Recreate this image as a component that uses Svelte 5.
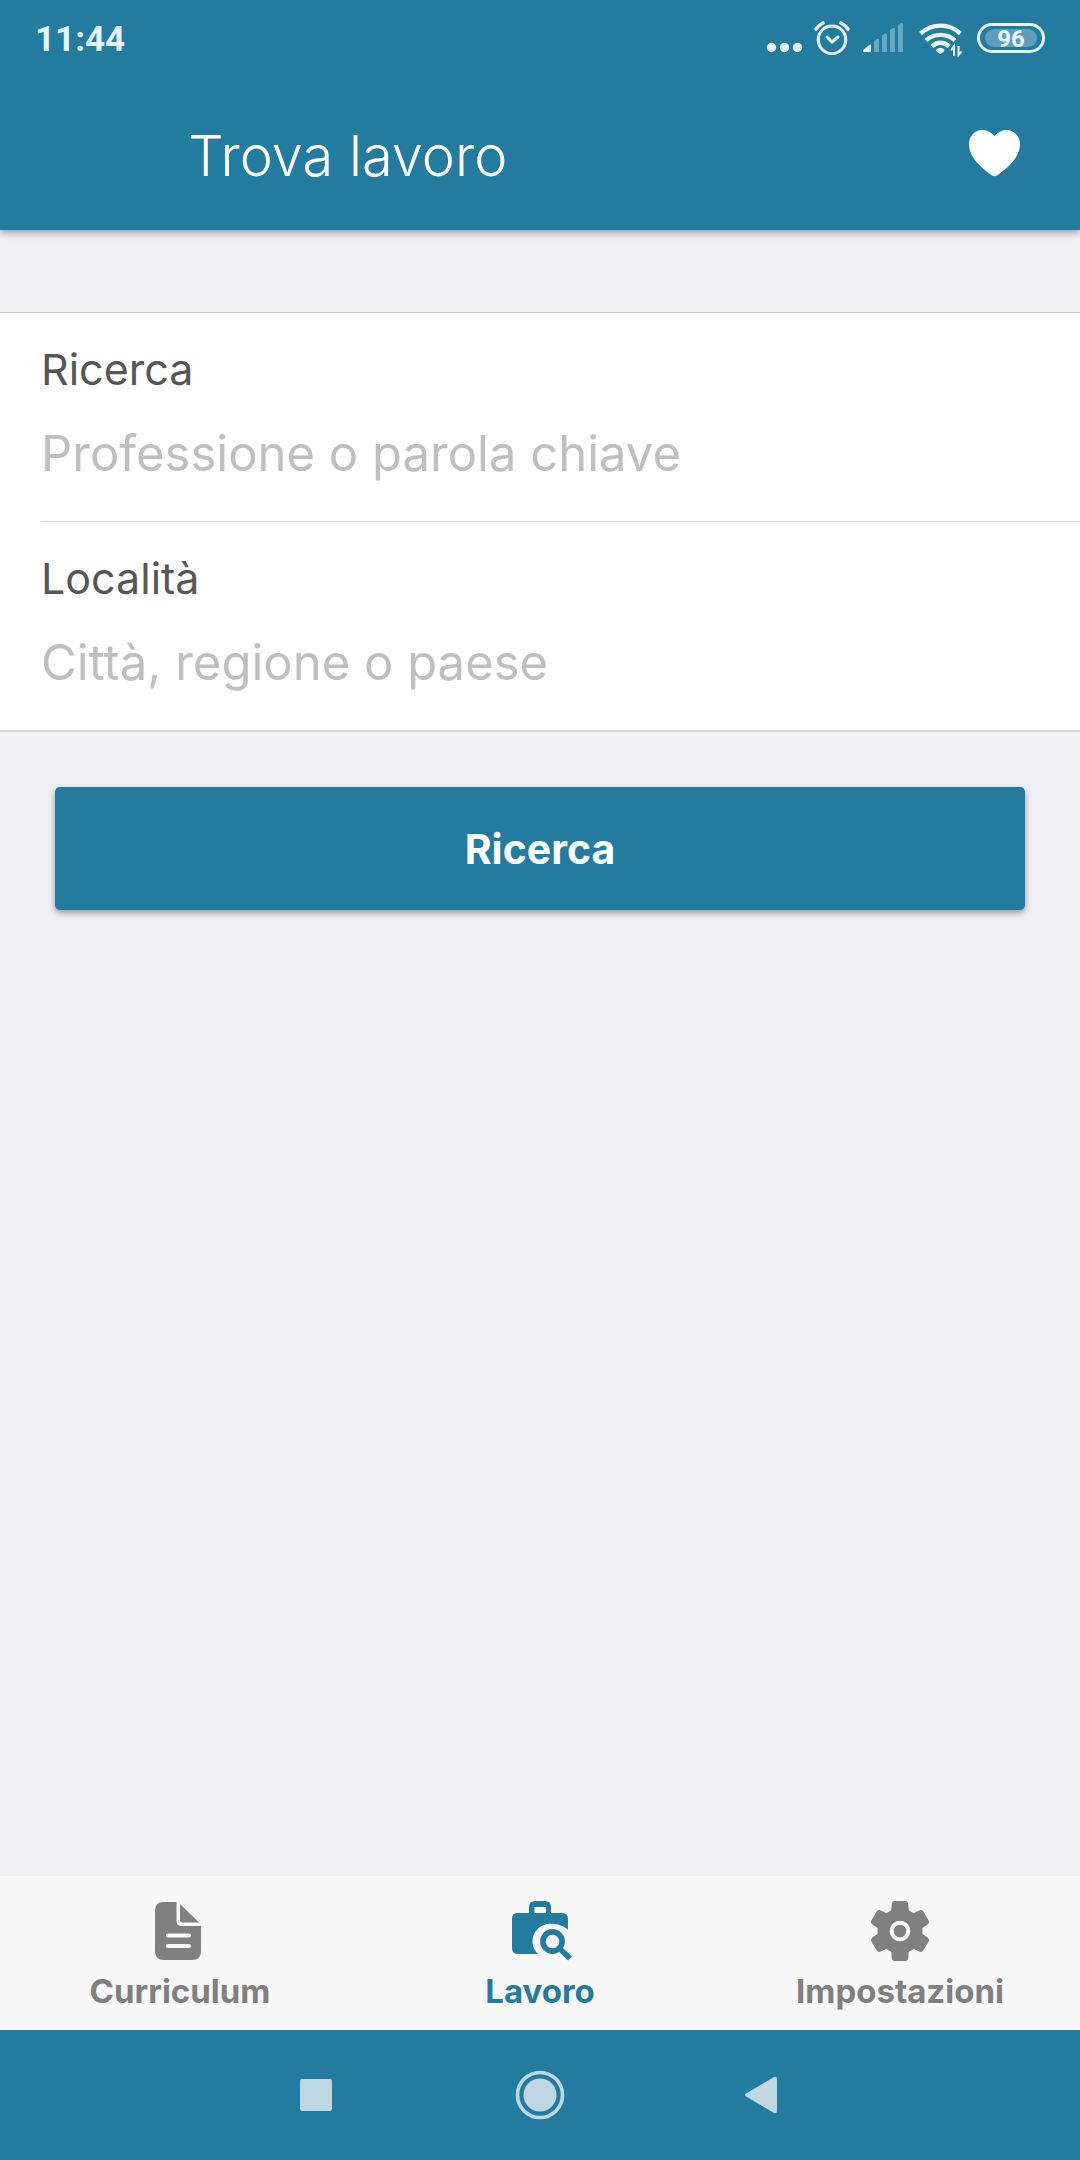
<script>
  let query = $state('');
  let place = $state('');
  let active = $state('lavoro');
</script>

<div class="screen">
  <header>
    <div class="status">
      <time>11:44</time>
      <div class="indicators">
        <svg width="36" height="52" viewBox="766 12 36 52" fill="#e6f4fb" aria-hidden="true">
          <circle cx="771.5" cy="47.5" r="4.7" /><circle cx="784.5" cy="47.5" r="4.7" /><circle cx="797.5" cy="47.5" r="4.7" />
        </svg>
        <svg width="37" height="52" viewBox="815 12 37 52" fill="none" stroke="#e6f4fb" stroke-width="3" stroke-linecap="round" aria-hidden="true">
          <circle cx="832" cy="39.8" r="13.8" />
          <path d="M827 37l5 5 6-5" stroke-linejoin="round" />
          <path d="M816 29c2-3 4-4.500 7-6M848 29c-2-3-4-4.500-7-6" stroke-width="3.600" />
        </svg>
        <svg width="42" height="52" viewBox="865 12 42 52" aria-hidden="true">
          <path d="M863 52v-2l7-5.500h1V52z" fill="#e6f4fb" />
          <path d="M874 52V41l3-2.200 2 .2v13zM882 52V35.500l3-2 2 .2V52zM890 52V30l3-2 2 .2V52zM898 52V25l3-2 2 .2V52z" fill="#67a8c2" />
        </svg>
        <svg width="44" height="52" viewBox="920 12 44 52" fill="none" stroke="#e6f4fb" stroke-width="4.400" aria-hidden="true">
          <path d="M920.500 33.500c12-10.500 28-10.500 40 0M926 40.500c8-7.500 21-7.500 29 0M932 46.500c5-5 12-5 17 0" />
          <path d="M936 50c2.500-3 6-3 8.500 0 .3 1-2.700 3.800-4.200 3.800s-4.600-2.800-4.300-3.800z" fill="#e6f4fb" stroke="none" />
          <path d="M954 56V46l-3 4.500M958.500 46v9l3-3.500" stroke-width="2" />
        </svg>
        <span class="battery"><span>96</span></span>
      </div>
    </div>
    <div class="bar">
      <h1>Trova lavoro</h1>
      <button class="fav" aria-label="Preferiti">
        <svg width="51" height="47" viewBox="0 0 51 47" fill="#fff" aria-hidden="true">
          <path d="M25.500 6C21.500 1.800 17.500 0 13.500 0 5.500 0 0 6.200 0 14c0 13.500 13 24.500 23 31.500q2.500 1.600 5 0C38 38.500 51 27.500 51 14 51 6.200 45 0 37.500 0c-4 0-8 1.800-12 6z" />
        </svg>
      </button>
    </div>
  </header>

  <main>
    <form onsubmit={(e) => e.preventDefault()}>
      <div class="fields">
        <div class="field">
          <label for="query">Ricerca</label>
          <input id="query" type="text" placeholder="Professione o parola chiave" bind:value={query} />
        </div>
        <div class="field">
          <label for="place">Località</label>
          <input id="place" type="text" placeholder="Città, regione o paese" bind:value={place} />
        </div>
      </div>
      <button class="submit" type="submit">Ricerca</button>
    </form>
  </main>

  <nav class="tabs" aria-label="Sezioni">
    <button class:active={active === 'curriculum'} onclick={() => (active = 'curriculum')}>
      <svg width="60" height="60" viewBox="2 0 60 60" aria-hidden="true">
        <path fill="currentColor" d="M15 1h13.500v18.500q0 5.500 5.500 5.500h19v25q0 9-9 9H16q-9 0-9-9V10Q7 1 15 1z" />
        <path fill="currentColor" d="M32 3v16q0 2.500 2.500 2.500H51z" />
        <path d="M20 34.500h21M20 45h21" stroke="#f8f8f8" stroke-width="4.200" stroke-linecap="round" />
      </svg>
      <span>Curriculum</span>
    </button>
    <button class:active={active === 'lavoro'} onclick={() => (active = 'lavoro')}>
      <svg width="60" height="60" viewBox="-1 0 60 60" aria-hidden="true">
        <path fill="currentColor" fill-rule="evenodd" d="M6 12h12V6q0-6 6-6h10q6 0 6 6v6h11q6 0 6 6v29q0 6-6 6H7q-6 0-6-6V18q0-6 5-6zM23.500 6v6h11.500V6z" />
        <path fill="#f8f8f8" d="M41.500 23a17.500 17.500 0 0 0-14 30.500H60V32q-7-9-18.500-9z" />
        <circle cx="41.500" cy="40.500" r="9.600" fill="none" stroke="currentColor" stroke-width="5.600" />
        <path d="M48.500 47.500l10.500 10" stroke="currentColor" stroke-width="5.600" />
      </svg>
      <span>Lavoro</span>
    </button>
    <button class:active={active === 'impostazioni'} onclick={() => (active = 'impostazioni')}>
      <svg width="60" height="60" viewBox="0 0 60 60" aria-hidden="true">
        <g fill="currentColor">
          <circle cx="30" cy="30" r="22.500" />
          {#each [0, 60, 120, 180, 240, 300] as angle}
            <path d="M19 14q2-2 2.300-5l.5-6Q22 0 25 0h10q3 0 3.200 3l.5 6q.3 3 2.300 5L30 30z" transform="rotate({angle} 30 30)" />
          {/each}
        </g>
        <circle cx="30" cy="30" r="8.300" fill="none" stroke="#f8f8f8" stroke-width="4" />
      </svg>
      <span>Impostazioni</span>
    </button>
  </nav>

  <div class="system">
    <button aria-label="App recenti">
      <svg width="50" height="50" viewBox="0 0 50 50"><rect x="7" y="9" width="32" height="32" rx="2" /></svg>
    </button>
    <button aria-label="Home">
      <svg width="50" height="50" viewBox="0 0 50 50"><circle cx="25" cy="25" r="16.500" /><circle class="ring" cx="25" cy="25" r="22.500" /></svg>
    </button>
    <button aria-label="Indietro">
      <svg width="50" height="50" viewBox="1 0 50 50"><path d="M10 23.500L38 7q3-1 3 2v32q0 3-3 2L10 26.500q-2-1.500 0-3z" /></svg>
    </button>
  </div>
</div>

<style>
  :global(body) {
    margin: 0;
  }
  .screen {
    display: flex;
    flex-direction: column;
    min-height: 100vh;
    background: #efeff4;
    font-family: Inter, 'Open Sans', sans-serif;
  }
  button {
    margin: 0;
    padding: 0;
    border: 0;
    background: none;
    font-family: inherit;
    cursor: pointer;
  }
  svg {
    display: block;
    overflow: visible;
  }
  header {
    background: #247ba0;
    color: #fff;
    box-shadow: 0 2px 8px rgba(0, 0, 0, 0.4);
  }
  .status {
    display: flex;
    align-items: center;
    justify-content: space-between;
    height: 76px;
    padding: 0 35px;
  }
  time {
    padding-top: 4px;
    color: #e6f4fb;
    font: 700 35px/40px Roboto, sans-serif;
  }
  .indicators {
    display: flex;
    align-items: center;
    gap: 13px;
  }
  .battery {
    display: flex;
    box-sizing: border-box;
    width: 68px;
    height: 30px;
    padding: 3px 5px;
    border: 3px solid #e6f4fb;
    border-radius: 15px;
  }
  .battery span {
    flex: 1;
    border-radius: 9px;
    background: #5d9fbc;
    color: #e6f4fb;
    font: 700 24px/20px Roboto, sans-serif;
    text-align: center;
  }
  .bar {
    display: flex;
    align-items: center;
    justify-content: space-between;
    height: 154px;
    padding: 0 60px 0 188px;
  }
  h1 {
    margin: 0;
    padding-top: 6px;
    font-size: 56px;
    font-weight: 300;
    line-height: 64px;
  }
  main {
    flex: 1;
    padding-top: 82px;
  }
  .fields {
    border-top: 1px solid #c8c7cc;
    border-bottom: 2px solid #d5d5d7;
    background: #fff;
  }
  .field {
    display: flex;
    flex-direction: column;
    margin-left: 41px;
    padding: 31px 0 32px;
  }
  .field + .field {
    border-top: 1px solid #d9d9d9;
  }
  label {
    color: #565656;
    font-size: 43px;
    line-height: 50px;
  }
  input {
    box-sizing: border-box;
    min-width: 0;
    height: 95px;
    padding: 24px 0 0;
    border: 0;
    outline: 0;
    background: none;
    color: #565656;
    font-family: inherit;
    font-size: 49px;
  }
  input::placeholder {
    color: #bfbfbf;
    opacity: 1;
  }
  .submit {
    display: block;
    width: calc(100% - 110px);
    margin: 55px;
    padding: 38px 0 36px;
    border-radius: 5px;
    background: #247ba0;
    box-shadow: 0 3px 6px rgba(0, 0, 0, 0.35);
    color: #fff;
    font-size: 41px;
    font-weight: 700;
    line-height: 49px;
  }
  .tabs {
    display: grid;
    grid-template-columns: repeat(3, 1fr);
    background: #f8f8f8;
  }
  .tabs button {
    display: flex;
    flex-direction: column;
    align-items: center;
    padding: 25px 0 19px;
    color: #808080;
    font-size: 33px;
    font-weight: 700;
    line-height: 40px;
  }
  .tabs span {
    margin-top: 10px;
  }
  .tabs .active {
    color: #247ba0;
  }
  .system {
    display: flex;
    align-items: center;
    justify-content: center;
    gap: 172px;
    height: 130px;
    background: #247ba0;
  }
  .system svg {
    fill: #bdd7e3;
  }
  .system .ring {
    fill: none;
    stroke: #bdd7e3;
    stroke-width: 3.6;
  }
</style>
